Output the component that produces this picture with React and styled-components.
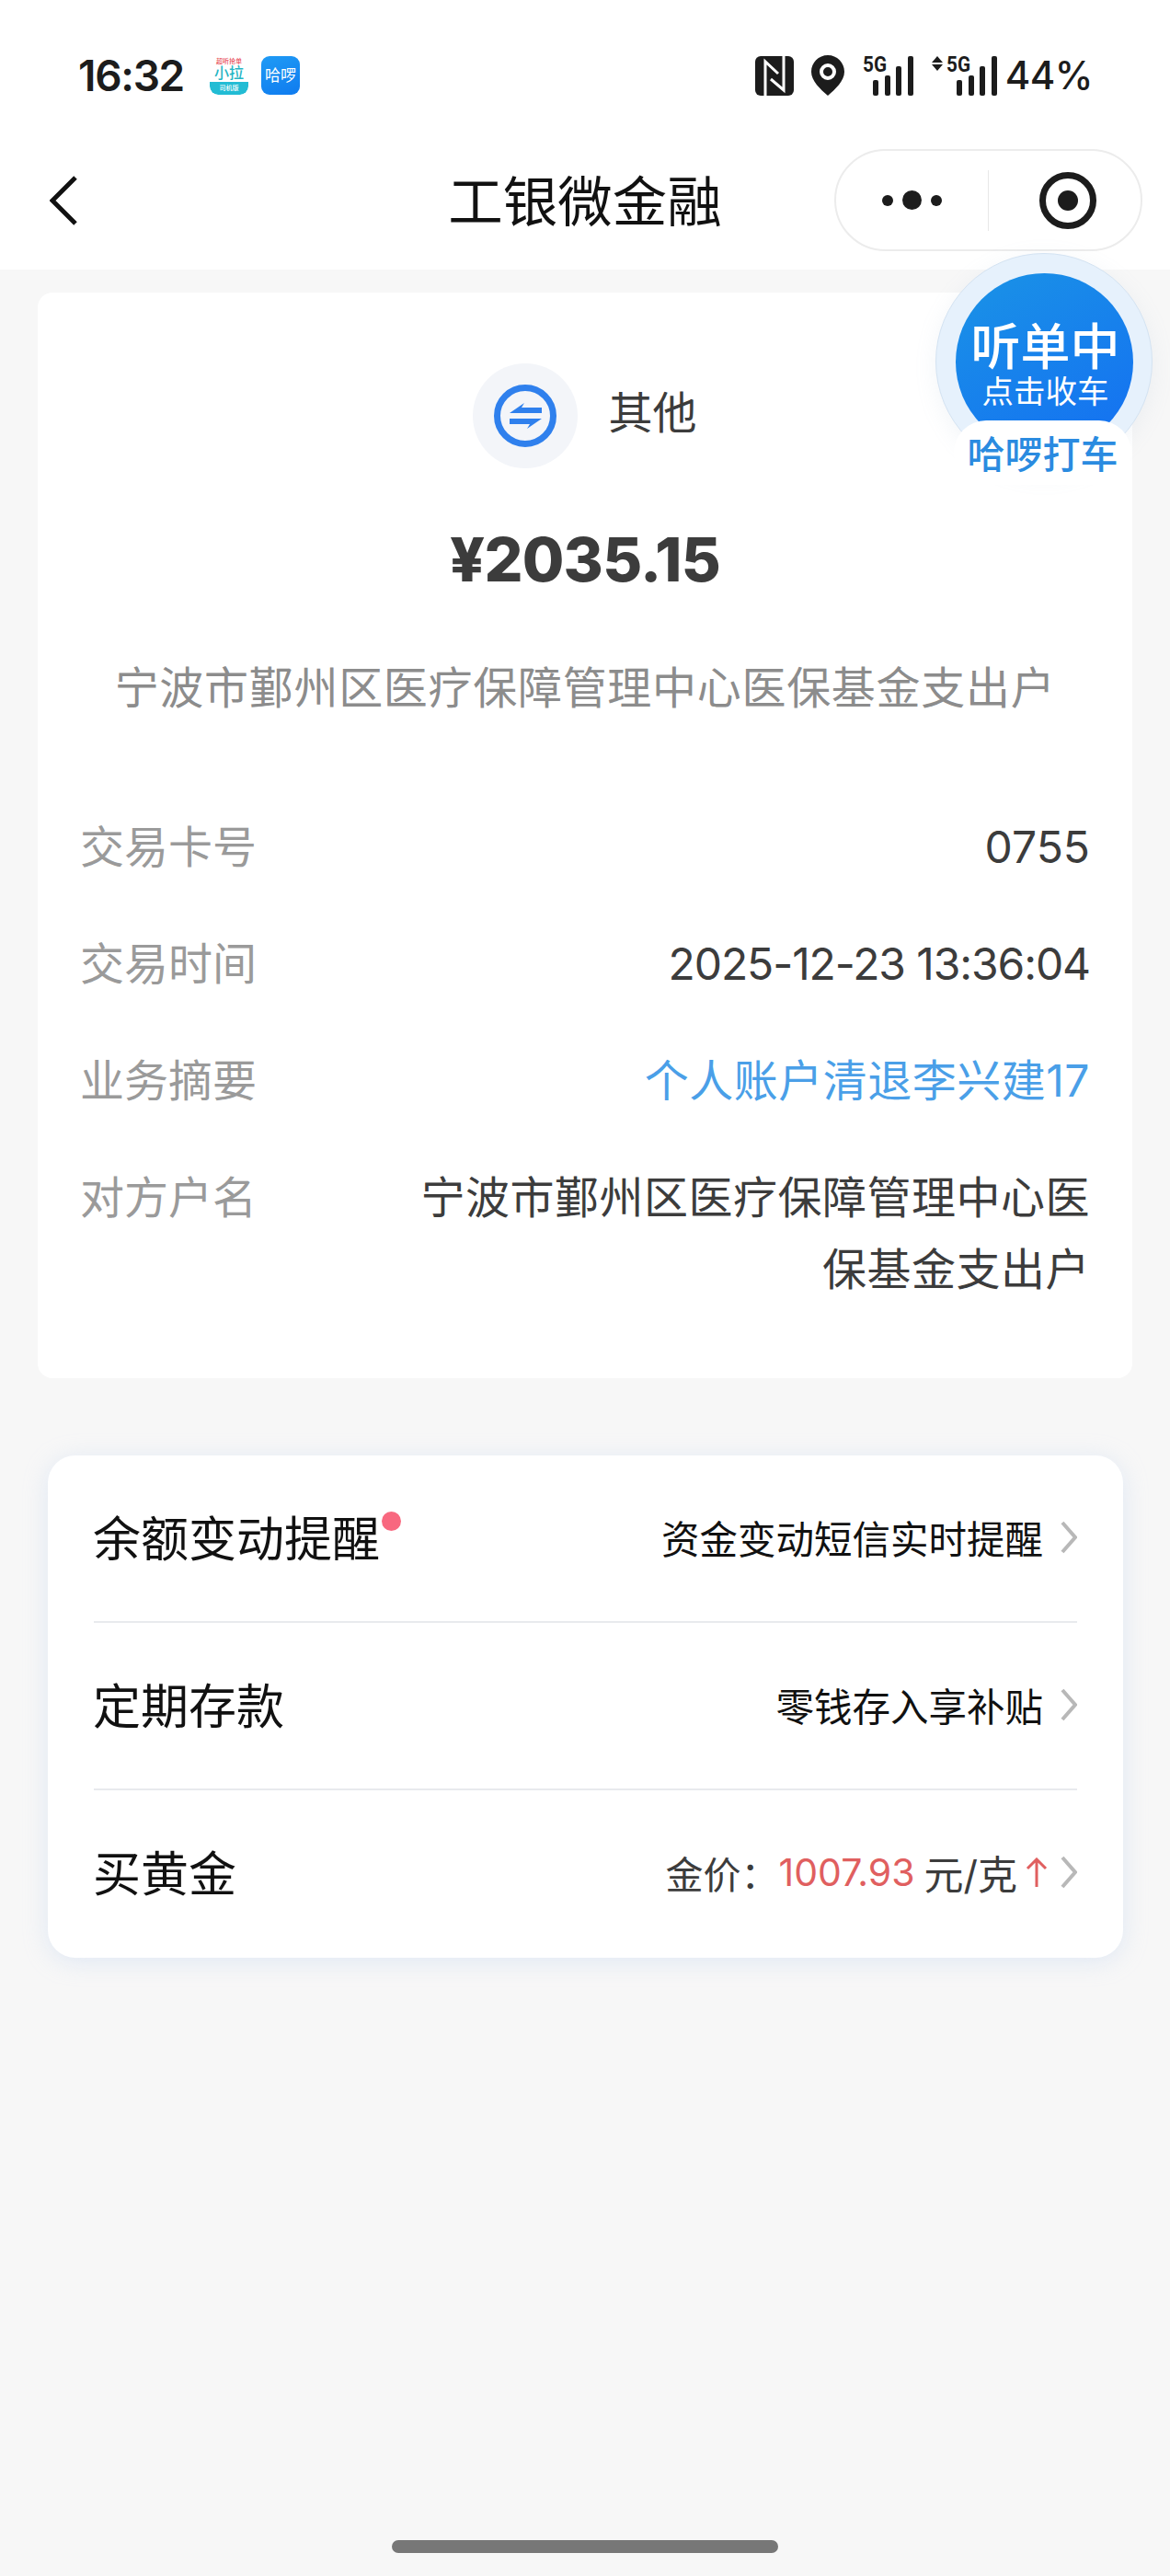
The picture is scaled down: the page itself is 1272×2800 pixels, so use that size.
import React from "react";
import styled, { createGlobalStyle } from "styled-components";

const GlobalStyle = createGlobalStyle`
  html, body {
    margin: 0;
    padding: 0;
    background: #f7f7f7;
  }
  body {
    font-family: "Inter", "Noto Sans CJK SC", sans-serif;
  }
`;

const Page = styled.div`
  position: relative;
  width: 1272px;
  min-height: 2800px;
  display: flex;
  flex-direction: column;
  background: #f7f7f7;
  overflow: hidden;
`;

const Header = styled.header`
  background: #fff;
  height: 293px;
`;

const StatusBar = styled.div`
  box-sizing: border-box;
  height: 162px;
  padding: 2px 84px 0 85px;
  display: flex;
  align-items: center;
  justify-content: space-between;
  color: #1c1c1c;
`;

const StatusLeft = styled.div`
  display: flex;
  align-items: center;
  gap: 14px;
`;

const Time = styled.span`
  font-size: 46px;
  font-weight: 600;
  letter-spacing: -1.3px;
  margin-right: 14px;
  line-height: 1;
`;

const AppIcon = styled.div`
  position: relative;
  width: 42px;
  height: 42px;
  border-radius: 9px;
  overflow: hidden;
  display: flex;
  flex-direction: column;
  align-items: center;
  justify-content: center;
  background: ${(p) => (p.$blue ? "linear-gradient(160deg,#1f9bf5,#0f7bef)" : "#fff")};
  color: ${(p) => (p.$blue ? "#fff" : "#25b5c4")};
  font-size: ${(p) => (p.$blue ? "17px" : "16px")};
  font-weight: ${(p) => (p.$blue ? 400 : 500)};
  line-height: 1;
  white-space: nowrap;
`;

const TinyRed = styled.span`
  color: #e8505b;
  font-size: 7px;
  line-height: 9px;
`;

const TinyFoot = styled.span`
  align-self: stretch;
  margin-top: 2px;
  height: 14px;
  background: #22bcd4;
  border-radius: 0 0 9px 9px;
  color: #fff;
  font-size: 7px;
  line-height: 14px;
  text-align: center;
`;

const StatusRight = styled.div`
  display: flex;
  align-items: center;
  gap: 19px;
`;

const Battery = styled.span`
  font-size: 42px;
  font-weight: 500;
  line-height: 1;
  margin-left: -11px;
  letter-spacing: -0.5px;
`;

const NavBar = styled.nav`
  height: 131px;
  padding: 0 30px 0 54px;
  display: grid;
  grid-template-columns: 1fr auto 1fr;
  align-items: start;
`;

const BackIcon = styled.svg`
  margin-top: 29px;
  width: 30px;
  height: 54px;
`;

const Title = styled.h1`
  margin: 23px 0 0 -24px;
  font-size: 59.5px;
  line-height: 68px;
  font-weight: 400;
  color: #111;
`;

const Capsule = styled.div`
  justify-self: end;
  box-sizing: border-box;
  width: 335px;
  height: 111px;
  border: 2px solid #ececec;
  border-radius: 56px;
  display: flex;
  align-items: center;
`;

const MoreDots = styled.div`
  width: 165px;
  display: flex;
  align-items: center;
  justify-content: center;
  gap: 10px;
`;

const Dot = styled.i`
  display: block;
  width: ${(p) => p.$size}px;
  height: ${(p) => p.$size}px;
  border-radius: 50%;
  background: #1c1c1c;
`;

const CapsuleDivider = styled.div`
  width: 1px;
  height: 66px;
  background: #e8e8e8;
`;

const Target = styled.div`
  margin-left: 55px;
  box-sizing: border-box;
  width: 62px;
  height: 62px;
  border: 7px solid #1c1c1c;
  border-radius: 50%;
  display: flex;
  align-items: center;
  justify-content: center;
  &::after {
    content: "";
    width: 22px;
    height: 22px;
    border-radius: 50%;
    background: #1c1c1c;
  }
`;

const DetailCard = styled.section`
  margin: 25px 41px 0;
  padding: 77px 46px 55px;
  background: #fff;
  border-radius: 16px;
`;

const Hero = styled.div`
  display: flex;
  align-items: center;
  justify-content: center;
  gap: 33px;
`;

const HeroIcon = styled.div`
  width: 114px;
  height: 114px;
  border-radius: 50%;
  background: #f3f5f9;
  display: flex;
  align-items: center;
  justify-content: center;
`;

const HeroLabel = styled.span`
  font-size: 48px;
  line-height: 60px;
  margin-bottom: 6px;
  color: #3c3c3c;
`;

const Amount = styled.div`
  margin-top: 59px;
  text-align: center;
  font-size: 66px;
  line-height: 80px;
  font-weight: 800;
  letter-spacing: -0.8px;
  color: #3c3c3c;
`;

const Merchant = styled.div`
  margin-top: 65px;
  text-align: center;
  font-size: 48px;
  line-height: 70px;
  letter-spacing: 0.7px;
  color: #8c8c8c;
  white-space: nowrap;
`;

const InfoList = styled.div`
  margin-top: 74px;
`;

const InfoRow = styled.div`
  display: flex;
  justify-content: space-between;
  padding: 24.5px 0;
  font-size: 48px;
  line-height: 78px;
`;

const InfoLabel = styled.span`
  color: #9a9a9a;
  flex: none;
`;

const InfoValue = styled.span`
  color: ${(p) => (p.$link ? "#4a9fe8" : "#3c3c3c")};
  text-align: right;
  width: 730px;
  letter-spacing: ${(p) => p.$spacing ?? 0.5}px;
`;

const ServiceCard = styled.section`
  margin: 84px 51px 0 52px;
  padding: 0 50px 2px;
  background: #fff;
  border-radius: 30px;
  box-shadow: 0 4px 26px rgba(190, 210, 240, 0.4);
`;

const ServiceRow = styled.div`
  position: relative;
  height: 178px;
  padding-bottom: 2px;
  display: flex;
  align-items: center;
  justify-content: space-between;
  border-top: ${(p) => (p.$first ? "none" : "2px solid #e8eaed")};
`;

const ServiceLabel = styled.span`
  position: relative;
  font-size: 52px;
  margin: 0 0 3px -1px;
  color: #111;
`;

const RedDot = styled.i`
  position: absolute;
  top: 11px;
  right: -23px;
  width: 21px;
  height: 21px;
  border-radius: 50%;
  background: #f8687f;
`;

const ServiceHint = styled.div`
  display: flex;
  align-items: center;
  font-size: 41.5px;
  color: #111;
`;

const GoldText = styled.span`
  font-size: ${(p) => p.$size || 41}px;
  color: ${(p) => p.$color || "#3c3c3c"};
  margin-left: ${(p) => p.$gap || 0}px;
`;

const GoldArrow = styled.svg`
  width: 24px;
  height: 32px;
  margin-left: 9px;
  margin-right: -5px;
`;

const Chevron = styled.svg`
  width: 18px;
  height: 36px;
  margin-left: 19px;
`;

const HomeBar = styled.div`
  width: 420px;
  height: 14px;
  border-radius: 7px;
  background: #777;
  margin: auto auto 25px;
`;

const Badge = styled.div`
  position: absolute;
  top: 275px;
  left: 1017px;
  box-sizing: border-box;
  width: 236px;
  height: 236px;
  border-radius: 50%;
  background: #e6f1fc;
  border: 1px solid #d4e3f2;
  box-shadow: 0 6px 24px rgba(150, 170, 200, 0.12);
`;

const BadgeCircle = styled.div`
  position: absolute;
  top: 21px;
  left: 21px;
  width: 193px;
  height: 193px;
  border-radius: 50%;
  background: linear-gradient(150deg, #1a93e6, #146ff2);
  color: #fff;
  display: flex;
  flex-direction: column;
  align-items: center;
  padding: 51px 0 0 2px;
  box-sizing: border-box;
`;

const BadgeMain = styled.div`
  font-size: 54px;
  line-height: 60px;
  font-weight: 500;
`;

const BadgeSub = styled.div`
  font-size: 34.5px;
  line-height: 36px;
`;

const BadgePill = styled.div`
  position: absolute;
  top: 181px;
  left: 19px;
  width: 193px;
  height: 70px;
  border-radius: 35px;
  background: #fff;
  color: #2a8be0;
  font-size: 41px;
  line-height: 74px;
  text-align: center;
  font-weight: 500;
  white-space: nowrap;
`;

// status bar signal, the text sits in a taller viewBox so the 5G glyphs stay inside
const SignalSvg = styled.svg`
  margin-top: -8px;
`;

const SignalIcon = ({ arrows }) => {
  const width = arrows ? 72 : 57;
  const textX = arrows ? 16 : 1;
  const barX = arrows ? 15 : 0;
  return (
    <SignalSvg width={width} height="51" viewBox={`0 -8 ${width} 51`}>
      {arrows && <path d="M6 0 L12 7 H0 Z M6 16 L12 9 H0 Z" fill="#1c1c1c" />}
      <text
        x={textX}
        y="17"
        fontFamily="Roboto"
        fontWeight="700"
        fontSize="23"
        textLength="26"
        lengthAdjust="spacingAndGlyphs"
        fill="#1c1c1c"
      >
        5G
      </text>
      {[
        [12, 26, 17],
        [25, 21, 22],
        [37, 11, 32],
        [50, 0, 43],
      ].map(([x, y, h]) => (
        <rect key={x} x={x + barX} y={y} width="6" height={h} rx="2" fill="#1c1c1c" />
      ))}
    </SignalSvg>
  );
};

const serviceChevron = (
  <Chevron viewBox="0 0 18 36">
    <path d="M2 2 L16 18 L2 34" fill="none" stroke="#b8b8b8" strokeWidth="4" />
  </Chevron>
);

const App = () => (
  <Page>
    <GlobalStyle />
    <Header>
      <StatusBar>
        <StatusLeft>
          <Time>16:32</Time>
          <AppIcon>
            <TinyRed>超听抢单</TinyRed>
            小拉
            <TinyFoot>司机版</TinyFoot>
          </AppIcon>
          <AppIcon $blue>哈啰</AppIcon>
        </StatusLeft>
        <StatusRight>
          <svg width="42" height="43" viewBox="0 0 42 43">
            <rect width="42" height="43" rx="6" fill="#1c1c1c" />
            <path d="M11 43 V6 L25 19" fill="none" stroke="#fff" strokeWidth="3" />
            <path d="M31 0 V37 L17 25" fill="none" stroke="#fff" strokeWidth="3" />
          </svg>
          <svg width="36" height="44" viewBox="0 0 36 44">
            <path
              fillRule="evenodd"
              d="M18 0 C28 0 36 8 36 18 C36 28 26 37 18 44 C10 37 0 28 0 18 C0 8 8 0 18 0 Z M18 9 A9 9 0 1 0 18 27 A9 9 0 1 0 18 9 Z M18 13 A5 5 0 1 1 18 23 A5 5 0 1 1 18 13 Z"
              fill="#1c1c1c"
            />
          </svg>
          <SignalIcon />
          <SignalIcon arrows />
          <Battery>44%</Battery>
        </StatusRight>
      </StatusBar>
      <NavBar>
        <BackIcon viewBox="0 0 30 54">
          <path d="M28 2 L3 27 L28 52" fill="none" stroke="#111" strokeWidth="5" />
        </BackIcon>
        <Title>工银微金融</Title>
        <Capsule>
          <MoreDots>
            <Dot $size={12} />
            <Dot $size={21} />
            <Dot $size={12} />
          </MoreDots>
          <CapsuleDivider />
          <Target />
        </Capsule>
      </NavBar>
    </Header>

    <DetailCard>
      <Hero>
        <HeroIcon>
          <svg width="68" height="68" viewBox="0 0 68 68">
            <circle cx="34" cy="34" r="30.5" fill="none" stroke="#2f80ed" strokeWidth="7" />
            <path d="M52 25 H30 L33 20 L17 31 H52 Z M17 37 H52 L36 48 L39 43 H17 Z" fill="#2f80ed" />
          </svg>
        </HeroIcon>
        <HeroLabel>其他</HeroLabel>
      </Hero>
      <Amount>¥2035.15</Amount>
      <Merchant>宁波市鄞州区医疗保障管理中心医保基金支出户</Merchant>
      <InfoList>
        <InfoRow>
          <InfoLabel>交易卡号</InfoLabel>
          <InfoValue $spacing={0}>0755</InfoValue>
        </InfoRow>
        <InfoRow>
          <InfoLabel>交易时间</InfoLabel>
          <InfoValue $spacing={-1.1}>2025-12-23 13:36:04</InfoValue>
        </InfoRow>
        <InfoRow>
          <InfoLabel>业务摘要</InfoLabel>
          <InfoValue $link>个人账户清退李兴建17</InfoValue>
        </InfoRow>
        <InfoRow>
          <InfoLabel>对方户名</InfoLabel>
          <InfoValue>宁波市鄞州区医疗保障管理中心医保基金支出户</InfoValue>
        </InfoRow>
      </InfoList>
    </DetailCard>

    <ServiceCard>
      <ServiceRow $first>
        <ServiceLabel>
          余额变动提醒
          <RedDot />
        </ServiceLabel>
        <ServiceHint>
          资金变动短信实时提醒
          {serviceChevron}
        </ServiceHint>
      </ServiceRow>
      <ServiceRow>
        <ServiceLabel>定期存款</ServiceLabel>
        <ServiceHint>
          零钱存入享补贴
          {serviceChevron}
        </ServiceHint>
      </ServiceRow>
      <ServiceRow>
        <ServiceLabel>买黄金</ServiceLabel>
        <ServiceHint>
          <GoldText>金价：</GoldText>
          <GoldText $color="#e05f5f">1007.93</GoldText>
          <GoldText $gap={10} $size={43}>元/克</GoldText>
          <GoldArrow viewBox="0 0 24 32">
            <path d="M12 32 V2 M2 12 L12 2 L22 12" fill="none" stroke="#e05f5f" strokeWidth="3" />
          </GoldArrow>
          {serviceChevron}
        </ServiceHint>
      </ServiceRow>
    </ServiceCard>

    <HomeBar />

    <Badge>
      <BadgeCircle>
        <BadgeMain>听单中</BadgeMain>
        <BadgeSub>点击收车</BadgeSub>
      </BadgeCircle>
      <BadgePill>哈啰打车</BadgePill>
    </Badge>
  </Page>
);

export default App;
